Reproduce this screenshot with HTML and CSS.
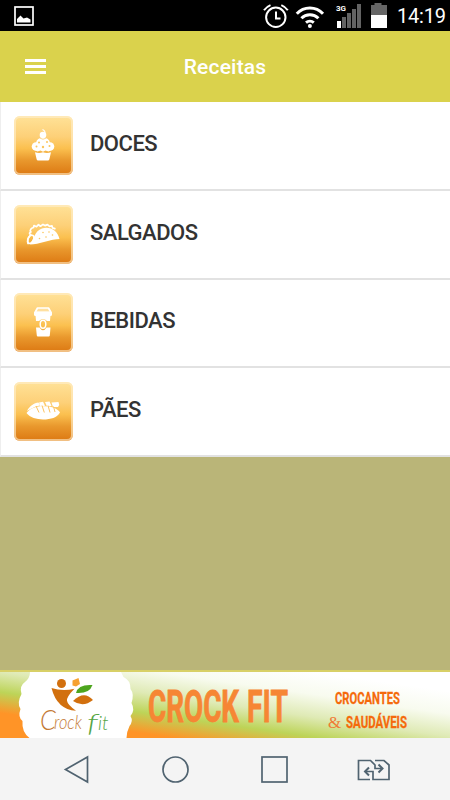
FILE: index.html
```
<!DOCTYPE html>
<html lang="pt-BR">
<head>
    <meta charset="UTF-8">
    <meta name="viewport" content="width=device-width, initial-scale=1.0">
    <title>Receitas</title>
    <link rel="stylesheet" href="styles.css">
</head>
<body>
    <div class="screen">
        <div class="statusbar">
            <svg class="status-picture" width="20" height="20" viewBox="0 0 20 20">
                <rect x="1" y="1" width="18" height="18" fill="none" stroke="#fff" stroke-width="1.7"/>
                <path d="M3 16.5V13l3.500-3.500 3 3 3.500-1 3.500 2v3z" fill="#fff"/>
            </svg>
            <svg class="status-icons" width="126" height="31" viewBox="0 0 126 31">
                <g fill="none" stroke="#fff" stroke-width="2">
                    <circle cx="12.800" cy="17.300" r="9.700"/>
                    <path d="M13 11.500v7h4.500M1 10.300a14 14 0 0 1 6.500-5.200M24.800 10.300a14 14 0 0 0-6.500-5.200"/>
                </g>
                <g fill="none" stroke="#fff" stroke-width="3">
                    <path d="M33.800 13.700a18 18 0 0 1 26.200 0M38.400 18.300a12 12 0 0 1 17 0M43 22.600a6 6 0 0 1 7.800 0"/>
                </g>
                <circle cx="46.900" cy="26" r="2" fill="#fff"/>
                <text class="network" x="73" y="11">3G</text>
                <rect x="74" y="21" width="4" height="7" fill="#fff"/>
                <path d="M79 17h4v11h-4zM84 13h4v15h-4zM89 9h4v19h-4zM94 4h4v24h-4z" fill="#636363"/>
                <path d="M108 5h3.500V3h7v2h5.500v10h-16z" fill="#666"/>
                <path d="M108 15h16v13h-16z" fill="#fff"/>
            </svg>
            <span class="clock">14:19</span>
        </div>

        <div class="header">
            <div class="menu"><i></i><i></i><i></i></div>
            <h1>Receitas</h1>
        </div>

        <ul class="list">
            <li>
                <div class="tile">
                    <svg width="59" height="59" viewBox="0 0 59 59">
                        <g fill="#fff">
                            <circle cx="29" cy="19" r="3.300"/>
                            <circle cx="22" cy="30.500" r="4.300"/>
                            <circle cx="36" cy="30.500" r="4.300"/>
                            <path d="M22 27q1-5.500 7-5.500t7 5.500l2 6.500-3.500 2-3-1-2.500 1.200-2.500-1.200-3 1-3.500-2z"/>
                            <path d="M21 36.300q4 1.500 8 0 4 1.500 8 0l-1.700 7.200q-.3 1-1.300 1H24q-1 0-1.300-1z"/>
                        </g>
                        <path d="M30.500 18q1.500-3-2-4.500" fill="none" stroke="#fff" stroke-width="1.200"/>
                        <path d="M25.500 22q3.500 2.500 7 0" fill="none" stroke="#fbc65f" stroke-width=".7"/>
                        <g fill="#fbc65f">
                            <circle cx="25" cy="26.500" r="1"/><circle cx="33" cy="26" r="1"/>
                            <circle cx="22.500" cy="30.500" r="1"/><circle cx="29" cy="31" r="1.200"/><circle cx="35.500" cy="30" r="1"/>
                        </g>
                    </svg>
                </div>
                <span class="doces">DOCES</span>
            </li>
            <li>
                <div class="tile">
                    <svg width="59" height="59" viewBox="0 0 59 59">
                        <path d="M14.500 38.500c-2-3 .5-7 2.300-9-2-.5-1.500-2 .2-2.500-2-2 .5-4 2.500-4.500l.5-2 2.500 1.200 2-2 2 1.500 2.500-1.800 2 1.200 2.500-1 2 1.800 2.500-.5.500 2 3 1" fill="none" stroke="#fff" stroke-width="1.700" stroke-linejoin="round"/>
                        <path d="M16 39.500C20 34 20.500 26 28 23.500c8-2.500 15.500 2 17.500 10.500-8 0-21 5.500-29.500 5.500z" fill="#fff"/>
                        <path d="M14 38.500c-2-6 4-10 5.500-7.500s-1 8-5.500 7.500z" fill="none" stroke="#fff" stroke-width="1.500"/>
                        <g fill="#fbc65f">
                            <circle cx="29" cy="27.500" r=".8"/><circle cx="35" cy="27" r=".8"/><circle cx="25.500" cy="33.500" r=".8"/>
                            <circle cx="32" cy="32" r=".8"/><circle cx="38.500" cy="30" r=".8"/>
                        </g>
                    </svg>
                </div>
                <span class="salgados">SALGADOS</span>
            </li>
            <li>
                <div class="tile">
                    <svg width="59" height="59" viewBox="0 0 59 59">
                        <path d="M21 19.500l2.500-4.500h11l2.500 4.500z" fill="#ffe0a0" stroke="#fff" stroke-width="1.700" stroke-linejoin="round"/>
                        <rect x="20" y="18.500" width="18" height="4.500" rx="1.500" fill="#fff"/>
                        <path d="M21.500 22h15l-.5 6h-3q-4-4-8 0h-3zM22 34.500h3.500q3.500 5.500 7 0H36.500l-.7 8q-.1 1-1.200 1H23.900q-1 0-1.100-1z" fill="#fff"/>
                        <ellipse cx="29" cy="31.300" rx="2.800" ry="4" fill="none" stroke="#fff" stroke-width="1.500"/>
                    </svg>
                </div>
                <span class="bebidas">BEBIDAS</span>
            </li>
            <li>
                <div class="tile">
                    <svg width="59" height="59" viewBox="0 0 59 59">
                        <path d="M13 29c3-5.500 7-8 11.500-8.500l1.500 3c-5 .5-9 3.500-13 5.500zM25 20.500l4-.7 2 4-4.500 1zM31 20l4.500-.4 2 4.400-4.500.5zM37.500 20.500l7-.5q1.500 2.500-.5 5l-5 0z" fill="#fff"/>
                        <path d="M12.500 31c4-5.500 11-7.500 21-6.500 5 .5 10 2 12.500 6-3 5-9 7-17 7-6.500-.2-13-1.800-16.500-6.500z" fill="#fff"/>
                        <path d="M22 24l3 6.500M28 23.500l2.300 7M34 23.500l2 7M39.500 24.500l1.500 5.500" stroke="#fbc260" stroke-width="1"/>
                    </svg>
                </div>
                <span class="paes">PÃES</span>
            </li>
        </ul>

        <div class="content"></div>

        <svg class="banner" width="450" height="66" viewBox="0 0 450 66">
            <defs>
                <linearGradient id="bg" gradientUnits="userSpaceOnUse" x1="6.400" y1="-44.500" x2="-6.400" y2="44.500">
                    <stop offset="0" stop-color="#fff"/>
                    <stop offset=".25" stop-color="#f8fbef"/>
                    <stop offset=".5" stop-color="#dfeab5"/>
                    <stop offset=".72" stop-color="#bdd458"/>
                    <stop offset=".95" stop-color="#ff9427"/>
                </linearGradient>
            </defs>
            <rect width="450" height="66" fill="url(#bg)"/>
            <path d="M30 0q0 6-5 10-6 4-3.500 12-5 9-1 15-3 8 2 12-1 11 7 17h97q0-6 3-12 4-5 1-10 5-6 1-13 3-9-1-14 0-9-7-12Q122 2 121 0z" fill="#fff"/>
            <g fill="#d2700e">
                <circle cx="61.500" cy="11.500" r="4.500"/>
                <path d="M51.500 16q11 3.500 23 .7-8 8-7.500 12t9 10q-19-1-24.500-22.700z"/>
                <path d="M73 29q11-11 20-1-10 8-20 1z"/>
            </g>
            <path d="M72.500 8.500l6-2.500 1.500 6-4 2.500-3.500-1z" fill="#f6a130"/>
            <path d="M76 21q2-9 16.500-8-3 9-16.500 8z" fill="#4da51e"/>
            <text class="logo logo-c" x="40" y="58" textLength="16" lengthAdjust="spacingAndGlyphs">C</text>
            <text class="logo" x="54" y="57" textLength="28" lengthAdjust="spacingAndGlyphs">rock</text>
            <text class="logo logo-fit logo-f" x="87" y="60" textLength="11" lengthAdjust="spacingAndGlyphs">f</text>
            <text class="logo logo-fit" x="98" y="58">it</text>
            <text class="brand" x="148" y="49.500" textLength="91" lengthAdjust="spacingAndGlyphs">CROCK</text>
            <text class="brand" x="247" y="49.500" textLength="41" lengthAdjust="spacingAndGlyphs">FIT</text>
            <text class="slogan" x="335" y="32" textLength="65" lengthAdjust="spacingAndGlyphs">CROCANTES</text>
            <text class="amp" x="328" y="55.500">&amp;</text>
            <text class="slogan" x="346" y="55.500" textLength="61" lengthAdjust="spacingAndGlyphs">SAUDÁVEIS</text>
        </svg>

        <div class="navbar">
            <svg width="450" height="62" viewBox="0 0 450 62">
                <g fill="none" stroke="#506370" stroke-width="1.700">
                    <path d="M87.500 19v25L65.500 31.500z"/>
                    <circle cx="175.500" cy="31.500" r="12.500"/>
                    <rect x="262" y="19" width="25" height="25"/>
                    <path d="M370 41.500h-11.500v-19h12l4.500 4.500v3.500h6M375 22.500h9l5 4.500v14.500h-16v-8h-7"/>
                    <path d="M378.500 26.500l4 4-4 4M369 29.500l-4 4 4 4" stroke-width="2"/>
                </g>
            </svg>
        </div>
    </div>
</body>
</html>
```
FILE: styles.css
```
body {
    margin: 0;
    font-family: Roboto, "Liberation Sans", sans-serif;
}
.screen {
    width: 450px;
    height: 800px;
    display: flex;
    flex-direction: column;
    overflow: hidden;
    background-color: #bab578;
}
.statusbar {
    height: 31px;
    flex: none;
    display: flex;
    align-items: center;
    background-color: #000;
    color: #fff;
}
.status-picture {
    margin-left: 14px;
}
.status-icons {
    margin-left: 229px;
}
.network {
    font-size: 8px;
    font-weight: bold;
    fill: #fff;
}
.clock {
    margin-left: 8px;
    padding-top: 2px;
    font-size: 20px;
    line-height: 31px;
    letter-spacing: -0.2px;
}
.header {
    height: 71px;
    flex: none;
    display: grid;
    grid-template-columns: 60px 1fr 60px;
    align-items: center;
    background-color: #dad24c;
}
.menu {
    width: 21px;
    margin-left: 25px;
    display: flex;
    flex-direction: column;
    gap: 3.5px;
}
.menu i {
    height: 2.5px;
    background-color: #fff;
}
h1 {
    margin: 0;
    color: #fff;
    font-size: 21px;
    font-weight: 500;
    text-align: center;
    letter-spacing: 0.2px;
}
.list {
    margin: 0;
    padding: 0;
    flex: none;
    list-style: none;
}
.list li {
    height: 88.75px;
    box-sizing: border-box;
    display: flex;
    align-items: center;
    padding-left: 13px;
    background-color: #fff;
    border-left: 1px solid #eee;
    border-bottom: 2px solid #e2e2e2;
}
.list span {
    margin-left: 17px;
    padding-bottom: 4px;
    font-size: 22px;
    font-weight: 500;
    letter-spacing: -0.5px;
    color: #333;
}
.tile {
    position: relative;
    width: 59px;
    height: 59px;
    border-radius: 6px;
    background: linear-gradient(#ffe298, #fdd078 35%, #fbc04f 55%, #e9982d 75%, #dc7812);
}
.tile::after {
    content: "";
    position: absolute;
    inset: 0;
    border: 2px solid rgba(255, 238, 205, 0.6);
    border-radius: 6px;
}
.tile svg {
    display: block;
}
.content {
    flex: 1;
}
.banner {
    flex: none;
    border-top: 2px solid #d8d067;
}
.logo {
    font-family: Lato, sans-serif;
    font-size: 19px;
    font-style: italic;
    font-weight: 300;
    fill: #c47a35;
}
.logo-c {
    font-size: 27px;
}
.logo-fit {
    fill: #55a544;
}
.logo-f {
    font-size: 26px;
}
.brand {
    font-size: 44px;
    font-weight: 700;
    fill: #f68634;
    stroke: #f68634;
    stroke-width: 0.8px;
}
.slogan {
    font-size: 17px;
    font-weight: 700;
    fill: #f56a0b;
    stroke: #f56a0b;
    stroke-width: 0.3px;
}
.amp {
    font-family: "Liberation Serif", serif;
    font-size: 17px;
    fill: #f07a35;
}
.navbar {
    height: 62px;
    flex: none;
    background-color: #f4f4f4;
}
.navbar svg {
    display: block;
}
```
